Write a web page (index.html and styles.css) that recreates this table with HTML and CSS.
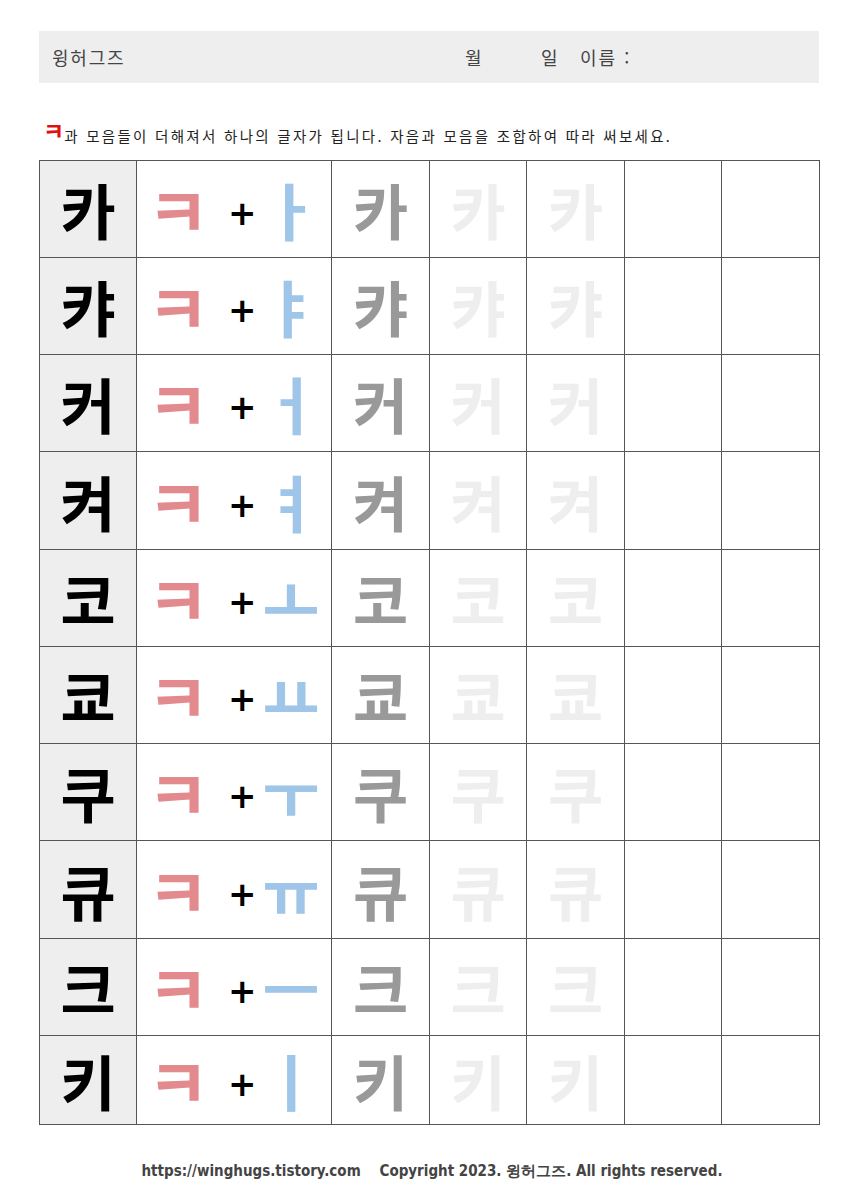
FILE: index.html
```html
<!DOCTYPE html>
<html lang="ko">
<head>
<meta charset="utf-8">
<title>ㅋ 자모 쓰기</title>
<link rel="stylesheet" href="styles.css">
</head>
<body>
<div class="page">
  <header class="head">
    <span class="brand">윙허그즈</span>
    <span class="month">월</span>
    <span class="day">일</span>
    <span class="name">이름 :</span>
  </header>

  <p class="intro"><span class="red">ㅋ</span>과 모음들이 더해져서 하나의 글자가 됩니다. 자음과 모음을 조합하여 따라 써보세요.</p>

  <div class="sheet">
    <div class="c head-cell">카</div><div class="c combo"><span class="cons">ㅋ</span><span class="plus">+</span><span class="vow">ㅏ</span></div><div class="c gray">카</div><div class="c faint">카</div><div class="c faint">카</div><div class="c"></div><div class="c"></div>
    <div class="c head-cell">캬</div><div class="c combo"><span class="cons">ㅋ</span><span class="plus">+</span><span class="vow">ㅑ</span></div><div class="c gray">캬</div><div class="c faint">캬</div><div class="c faint">캬</div><div class="c"></div><div class="c"></div>
    <div class="c head-cell">커</div><div class="c combo"><span class="cons">ㅋ</span><span class="plus">+</span><span class="vow">ㅓ</span></div><div class="c gray">커</div><div class="c faint">커</div><div class="c faint">커</div><div class="c"></div><div class="c"></div>
    <div class="c head-cell">켜</div><div class="c combo"><span class="cons">ㅋ</span><span class="plus">+</span><span class="vow">ㅕ</span></div><div class="c gray">켜</div><div class="c faint">켜</div><div class="c faint">켜</div><div class="c"></div><div class="c"></div>
    <div class="c head-cell">코</div><div class="c combo"><span class="cons">ㅋ</span><span class="plus">+</span><span class="vow">ㅗ</span></div><div class="c gray">코</div><div class="c faint">코</div><div class="c faint">코</div><div class="c"></div><div class="c"></div>
    <div class="c head-cell">쿄</div><div class="c combo"><span class="cons">ㅋ</span><span class="plus">+</span><span class="vow">ㅛ</span></div><div class="c gray">쿄</div><div class="c faint">쿄</div><div class="c faint">쿄</div><div class="c"></div><div class="c"></div>
    <div class="c head-cell">쿠</div><div class="c combo"><span class="cons">ㅋ</span><span class="plus">+</span><span class="vow">ㅜ</span></div><div class="c gray">쿠</div><div class="c faint">쿠</div><div class="c faint">쿠</div><div class="c"></div><div class="c"></div>
    <div class="c head-cell">큐</div><div class="c combo"><span class="cons">ㅋ</span><span class="plus">+</span><span class="vow">ㅠ</span></div><div class="c gray">큐</div><div class="c faint">큐</div><div class="c faint">큐</div><div class="c"></div><div class="c"></div>
    <div class="c head-cell">크</div><div class="c combo"><span class="cons">ㅋ</span><span class="plus">+</span><span class="vow">ㅡ</span></div><div class="c gray">크</div><div class="c faint">크</div><div class="c faint">크</div><div class="c"></div><div class="c"></div>
    <div class="c head-cell">키</div><div class="c combo"><span class="cons">ㅋ</span><span class="plus">+</span><span class="vow">ㅣ</span></div><div class="c gray">키</div><div class="c faint">키</div><div class="c faint">키</div><div class="c"></div><div class="c"></div>
  </div>

  <footer class="foot">https://winghugs.tistory.com&nbsp;&nbsp;&nbsp;&nbsp;Copyright 2023. 윙허그즈. All rights reserved.</footer>
</div>
</body>
</html>
```

FILE: styles.css
```css
html, body {
  margin: 0;
  padding: 0;
  background: #fff;
}

body {
  font-family: "Noto Sans CJK KR", "Noto Sans", sans-serif;
  color: #222;
}

.page {
  width: 781px;
  padding: 31px 0 0 39px;
}

.head {
  height: 52px;
  background: #eeeeee;
  display: flex;
  align-items: center;
  font-size: 18px;
  color: #444;
  width: 780px;
}

.brand {
  margin-left: 13px;
  width: 413px;
  letter-spacing: 1.8px;
}

.month {
  width: 76px;
}

.day {
  width: 39px;
}

.name {
  letter-spacing: 2px;
}

.intro {
  margin: 41px 0 0 4px;
  height: 24px;
  font-size: 14.5px;
  line-height: 24px;
  color: #222;
  letter-spacing: 2.3px;
  white-space: nowrap;
}

.red {
  color: #e01010;
  font-weight: 700;
  font-size: 23px;
  line-height: 0;
  vertical-align: 2px;
  letter-spacing: 0;
}

.sheet {
  margin-top: 12px;
  display: grid;
  grid-template-columns: 96px 194px 97px 96px 97px 96px 97px;
  grid-template-rows: 96px 96px 96px 97px 96px 96px 96px 97px 96px 88px;
  gap: 1px;
  padding: 1px;
  background: #555;
  width: 781px;
  box-sizing: border-box;
}

.c {
  background: #fff;
  display: flex;
  align-items: center;
  justify-content: center;
  font-size: 60px;
  font-weight: 700;
  line-height: 1;
}

.head-cell {
  background: #eeeeee;
  color: #000;
}

.gray {
  color: #999;
}

.faint {
  color: #eeeeee;
}

.combo {
  justify-content: flex-start;
  padding-left: 7px;
}

.cons {
  width: 68px;
  flex: none;
  text-align: center;
  color: #e38a8e;
  font-size: 68px;
}

.plus {
  width: 24px;
  flex: none;
  margin-left: 16px;
  text-align: center;
  color: #000;
  font-size: 34px;
  font-family: "DejaVu Sans", sans-serif;
  font-weight: 700;
  padding-top: 8px;
}

.vow {
  width: 62px;
  flex: none;
  margin-left: 8px;
  text-align: center;
  color: #9fc5e8;
  font-size: 62px;
}

.foot {
  margin-top: 37px;
  text-align: center;
  font-family: "DejaVu Sans Condensed", "DejaVu Sans", sans-serif;
  font-weight: 700;
  font-size: 15px;
  color: #444;
  padding-left: 5px;
}
```
